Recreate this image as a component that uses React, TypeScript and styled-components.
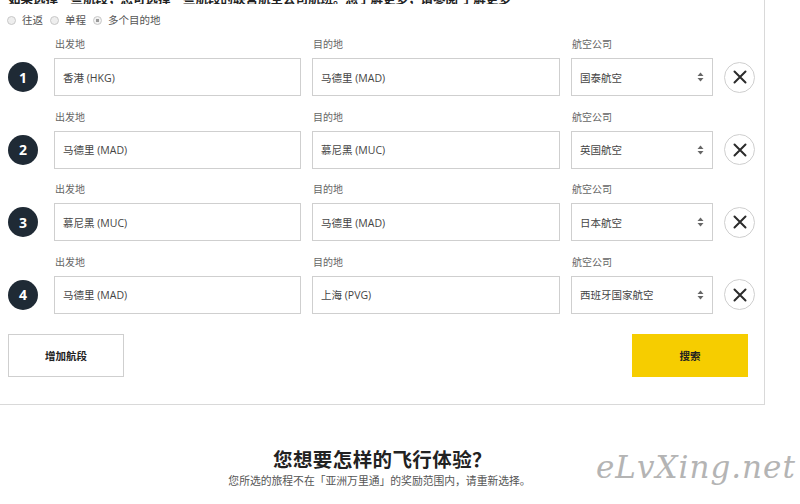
import React, { FC } from "react";
import styled, { createGlobalStyle } from "styled-components";

const GlobalStyle = createGlobalStyle`
  html, body {
    margin: 0;
    padding: 0;
    background: #ffffff;
  }
  body {
    font-family: "Open Sans", "Noto Sans CJK SC", sans-serif;
    color: #333;
  }
`;

type Segment = {
  origin: string;
  destination: string;
  airline: string;
};

const SEGMENTS: Segment[] = [
  { origin: "香港 (HKG)", destination: "马德里 (MAD)", airline: "国泰航空" },
  { origin: "马德里 (MAD)", destination: "慕尼黑 (MUC)", airline: "英国航空" },
  { origin: "慕尼黑 (MUC)", destination: "马德里 (MAD)", airline: "日本航空" },
  { origin: "马德里 (MAD)", destination: "上海 (PVG)", airline: "西班牙国家航空" },
];

const TRIP_TYPES = ["往返", "单程", "多个目的地"];

const SelectArrows: FC = () => (
  <svg width="7" height="10" viewBox="0 0 7 10">
    <path d="M3.5 0.5 L6.5 4 L0.5 4 Z" fill="#666" />
    <path d="M3.5 9.5 L6.5 6 L0.5 6 Z" fill="#666" />
  </svg>
);

const CloseIcon: FC = () => (
  <svg width="14" height="14" viewBox="0 0 14 14">
    <path
      d="M1.5 1.5 L12.5 12.5 M12.5 1.5 L1.5 12.5"
      stroke="#2b2b2b"
      strokeWidth="2"
      strokeLinecap="round"
    />
  </svg>
);

const App: FC = () => {
  return (
    <Page>
      <GlobalStyle />
      <Card>
        <TopNote>
          <span>
            如果选择一些航段，您可选择一些航段的联营航空公司航班。想了解更多，请参阅{" "}
            <u>了解更多</u>
          </span>
        </TopNote>
        <TripTypes>
          {TRIP_TYPES.map((t, i) => (
            <TripOption key={t}>
              <Radio checked={i === 2} />
              {t}
            </TripOption>
          ))}
        </TripTypes>

        <Segments>
          {SEGMENTS.map((s, i) => (
            <SegmentRow key={i}>
              <FieldLabel $col={2}>出发地</FieldLabel>
              <FieldLabel $col={3}>目的地</FieldLabel>
              <FieldLabel $col={4}>航空公司</FieldLabel>
              <StepBadge>{i + 1}</StepBadge>
              <TextBox>{s.origin}</TextBox>
              <TextBox>{s.destination}</TextBox>
              <SelectBox>
                <span>{s.airline}</span>
                <SelectArrows />
              </SelectBox>
              <RemoveButton aria-label="remove">
                <CloseIcon />
              </RemoveButton>
            </SegmentRow>
          ))}
        </Segments>

        <Actions>
          <ActionButton $variant="outline">增加航段</ActionButton>
          <ActionButton $variant="primary">搜索</ActionButton>
        </Actions>
      </Card>

      <Experience>
        <Heading>您想要怎样的飞行体验？</Heading>
        <SubText>您所选的旅程不在「亚洲万里通」的奖励范围内，请重新选择。</SubText>
        <Watermark>eLvXing.net</Watermark>
      </Experience>
    </Page>
  );
};

const Page = styled.div`
  width: 800px;
  height: 504px;
  overflow: hidden;
  position: relative;
`;

const Card = styled.section`
  width: 765px;
  box-sizing: border-box;
  border-right: 1px solid #d9d9d9;
  border-bottom: 1px solid #d9d9d9;
  padding: 0 0 27px 0;
  background: #fff;
`;

const TopNote = styled.div`
  height: 4px;
  overflow: hidden;
  display: flex;
  align-items: flex-end;
  padding-left: 8px;
  font-family: "Noto Sans CJK SC", sans-serif;
  font-weight: 700;
  font-size: 12.5px;
  line-height: 16px;
  color: #222;
  white-space: nowrap;

  span {
    display: block;
    transform: translateY(3px);
  }
`;

const TripTypes = styled.div`
  display: flex;
  align-items: center;
  gap: 7px;
  padding: 9px 0 0 7px;
  height: 14px;
`;

const TripOption = styled.label`
  display: flex;
  align-items: center;
  gap: 6px;
  font-family: "Noto Sans CJK SC", sans-serif;
  font-size: 10.5px;
  color: #555;
  line-height: 14px;
`;

const Radio = styled.span<{ checked?: boolean }>`
  width: 7px;
  height: 7px;
  border-radius: 50%;
  border: 1px solid #c8c8c8;
  background: ${(p) =>
    p.checked ? "radial-gradient(circle, #999 0 1.6px, #f2f2f2 2px)" : "#eee"};
  box-sizing: content-box;
`;

const Segments = styled.div`
  display: flex;
  flex-direction: column;
  gap: 13.5px;
  padding: 10px 0 0 3px;
`;

const SegmentRow = styled.div`
  display: grid;
  grid-template-columns: 40px 247px 248px 142px 31px;
  grid-template-rows: 14px 38px;
  column-gap: 11px;
  row-gap: 7px;
`;

const FieldLabel = styled.div<{ $col: number }>`
  grid-row: 1;
  grid-column: ${(p) => p.$col};
  font-family: "Noto Sans CJK SC", sans-serif;
  font-size: 10px;
  line-height: 14px;
  color: #666;
  padding-left: 1px;
`;

const StepBadge = styled.div`
  grid-row: 2;
  grid-column: 1;
  justify-self: center;
  align-self: center;
  width: 30px;
  height: 30px;
  border-radius: 50%;
  background: #1f2a35;
  color: #fff;
  display: flex;
  align-items: center;
  justify-content: center;
  font-family: "Open Sans", sans-serif;
  font-weight: 700;
  font-size: 14px;
`;

const TextBox = styled.div`
  grid-row: 2;
  box-sizing: border-box;
  height: 38px;
  border: 1px solid #cfcfcf;
  display: flex;
  align-items: center;
  padding-left: 8px;
  font-size: 10.5px;
  color: #444;
`;

const SelectBox = styled(TextBox)`
  justify-content: space-between;
  padding-right: 8px;
`;

const RemoveButton = styled.button`
  grid-row: 2;
  align-self: center;
  width: 31px;
  height: 31px;
  border-radius: 50%;
  border: 1px solid #cfcfcf;
  background: #fff;
  padding: 0;
  display: flex;
  align-items: center;
  justify-content: center;
`;

const Actions = styled.div`
  display: flex;
  justify-content: space-between;
  padding: 20px 16px 0 8px;
`;

const ActionButton = styled.button<{ $variant: "outline" | "primary" }>`
  width: 116px;
  height: 43px;
  box-sizing: border-box;
  font-family: "Noto Sans CJK SC", sans-serif;
  font-weight: 700;
  font-size: 10.5px;
  color: #222;
  border: 1px solid ${(p) => (p.$variant === "primary" ? "#f6cd00" : "#cfcfcf")};
  background: ${(p) => (p.$variant === "primary" ? "#f6cd00" : "#fff")};
`;

const Experience = styled.div`
  width: 765px;
  padding-top: 40px;
  display: flex;
  flex-direction: column;
  align-items: center;
`;

const Heading = styled.h2`
  margin: 0;
  font-family: "Noto Sans CJK SC", sans-serif;
  font-weight: 700;
  font-size: 19.5px;
  line-height: 28px;
  letter-spacing: 0.4px;
  color: #222;
`;

const SubText = styled.p`
  margin: 0 0 0 -6px;
  font-family: "Noto Sans CJK SC", sans-serif;
  font-size: 10.8px;
  line-height: 14px;
  color: #555;
`;

const Watermark = styled.div`
  position: absolute;
  left: 596px;
  top: 449px;
  font-family: "DejaVu Serif", serif;
  font-style: italic;
  font-size: 31px;
  letter-spacing: 1px;
  color: #b4b4b4;
`;

export default App;
